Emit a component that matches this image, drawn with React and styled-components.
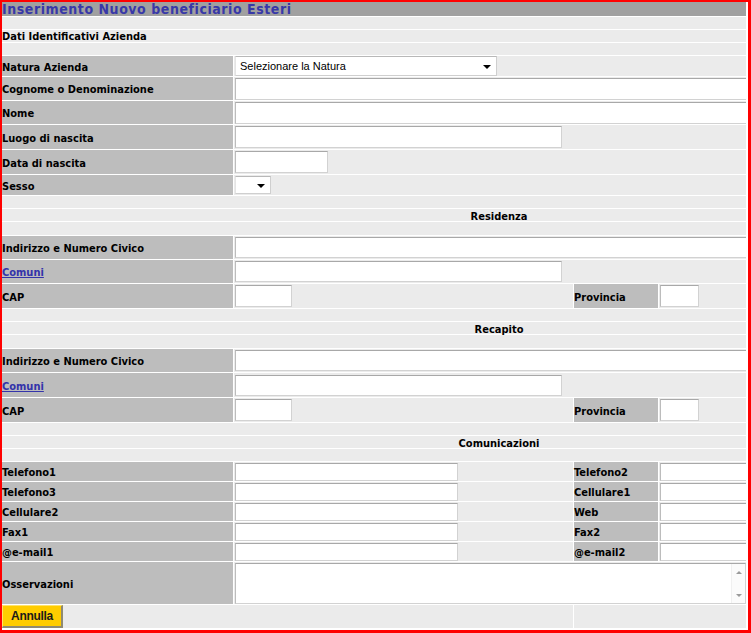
import React from "react";
import styled, { createGlobalStyle } from "styled-components";

const GlobalStyle = createGlobalStyle`
  html, body { margin: 0; padding: 0; background: #fff; }
  body { width: 751px; height: 633px; overflow: hidden; }
  * { box-sizing: border-box; }
`;

const Frame = styled.div`
  width: 751px;
  height: 633px;
  border-style: solid;
  border-color: #ff0000;
  border-width: 2px 3px 3px 2px;
  padding: 0 2px 2px 0;
  background: #fff;
`;

const Viewport = styled.div`
  width: 744px;
  height: 626px;
  overflow: hidden;
`;

const Sheet = styled.div`
  width: 994px;
  display: flex;
  flex-direction: column;
  gap: 1px;
  background: #fff;
  font-family: "DejaVu Sans Condensed", "DejaVu Sans", sans-serif;
  font-size: 11px;
  font-weight: bold;
  color: #000;
`;

const TitleBar = styled.div`
  height: 14px;
  background: #a0a0a0;
  color: #3838a8;
  font-size: 14px;
  line-height: 15px;
  letter-spacing: 0.55px;
  white-space: nowrap;
`;

const Band = styled.div`
  height: ${(p) => p.$h || 12}px;
  background: #ebebeb;
  line-height: ${(p) => (p.$h || 12) + (p.$center ? 4 : 2)}px;
  text-align: ${(p) => (p.$center ? "center" : "left")};
  white-space: nowrap;
  overflow: visible;
`;

const Row = styled.div`
  height: ${(p) => p.$h}px;
  display: grid;
  grid-template-columns: ${(p) =>
    p.$quad ? "231px 339px 84px 1fr" : p.$foot ? "571px 1fr" : "231px 1fr"};
  gap: 1px;
  background: #fff;
`;

const Label = styled.div`
  background: #bdbdbd;
  display: flex;
  align-items: center;
  white-space: nowrap;
  padding-top: 2px;
`;

const Value = styled.div`
  background: #ebebeb;
  display: flex;
  align-items: center;
  padding-left: 1px;
`;

const TextInput = styled.input`
  width: ${(p) => p.$w}px;
  height: ${(p) => p.$ih || 21}px;
  background: #fff;
  border: 1px solid;
  border-color: #a8a8a8 #d2d2d2 #d2d2d2 #bcbcbc;
  margin: 0;
  padding: 0 2px;
  font-family: "Liberation Sans", Arial, sans-serif;
  font-size: 11px;
  outline: none;
  flex: none;
`;

const SelectBox = styled.div`
  width: ${(p) => p.$w}px;
  height: ${(p) => p.$ih}px;
  background: #fff;
  border: 1px solid;
  border-color: #b8b8b8 #cfcfcf #cfcfcf #e4e4e4;
  display: flex;
  align-items: center;
  justify-content: space-between;
  padding: 0 5px 0 4px;
  font-family: "Liberation Sans", Arial, sans-serif;
  font-size: 11px;
  font-weight: normal;
  color: #000;
  flex: none;
`;

const Caret = styled.span`
  width: 0;
  height: 0;
  border-left: 4px solid transparent;
  border-right: 4px solid transparent;
  border-top: 4px solid #000;
  margin-top: 1px;
`;

const LinkText = styled.a`
  color: #3333aa;
  text-decoration: underline;
  cursor: pointer;
`;

const AreaBox = styled.div`
  width: 511px;
  height: 41px;
  display: flex;
  background: #fff;
  border: 1px solid;
  border-color: #a8a8a8 #d2d2d2 #d2d2d2 #bcbcbc;
  flex: none;
`;

const Area = styled.textarea`
  flex: 1;
  border: none;
  resize: none;
  outline: none;
  margin: 0;
  padding: 2px;
  font-family: "Liberation Sans", Arial, sans-serif;
  font-size: 11px;
  overflow: hidden;
`;

const Rail = styled.div`
  width: 14px;
  display: flex;
  flex-direction: column;
  align-items: center;
  justify-content: space-between;
  padding: 7px 0 6px;
  background: #fbfbfb;
  border-left: 1px solid #f0f0f0;
`;

const RailArrow = styled.span`
  width: 0;
  height: 0;
  border-left: 3px solid transparent;
  border-right: 3px solid transparent;
  ${(p) =>
    p.$up
      ? "border-bottom: 3px solid #9a9a9a;"
      : "border-top: 3px solid #9a9a9a;"}
`;

const FootCell = styled.div`
  background: #ebebeb;
  display: flex;
  align-items: stretch;
`;

const Button = styled.button`
  width: 61px;
  height: 23px;
  margin: 0;
  padding: 0;
  background: #ffcc00;
  border: 1px solid;
  border-color: #ffe36a #8f8a72 #8f8a72 #ffe36a;
  border-right-width: 2px;
  border-bottom-width: 2px;
  font-family: "Liberation Sans", Arial, sans-serif;
  font-size: 12px;
  font-weight: bold;
  letter-spacing: -0.3px;
  color: #1a1a1a;
  cursor: pointer;
`;

function Field({ label, h, children }) {
  return (
    <Row $h={h}>
      <Label>{label}</Label>
      <Value>{children}</Value>
    </Row>
  );
}

function Quad({ label, h, left, label2, right }) {
  return (
    <Row $h={h} $quad>
      <Label>{label}</Label>
      <Value>{left}</Value>
      <Label>{label2}</Label>
      <Value>{right}</Value>
    </Row>
  );
}

function AddressBlock({ title }) {
  return (
    <>
      <Band $h={12} />
      <Band $h={12} $center>
        {title}
      </Band>
      <Band $h={13} />
      <Field label="Indirizzo e Numero Civico" h={23}>
        <TextInput $w={720} />
      </Field>
      <Field label={<LinkText>Comuni</LinkText>} h={title === "Residenza" ? 23 : 24}>
        <TextInput $w={327} />
      </Field>
      <Quad
        label="CAP"
        h={24}
        left={<TextInput $w={57} $ih={22} />}
        label2="Provincia"
        right={<TextInput $w={39} $ih={22} />}
      />
    </>
  );
}

const contacts = [
  ["Telefono1", "Telefono2"],
  ["Telefono3", "Cellulare1"],
  ["Cellulare2", "Web"],
  ["Fax1", "Fax2"],
  ["@e-mail1", "@e-mail2"],
];

export default function App() {
  return (
    <>
      <GlobalStyle />
      <Frame>
        <Viewport>
          <Sheet>
            <TitleBar>Inserimento Nuovo beneficiario Esteri</TitleBar>
            <Band $h={12} />
            <Band $h={12}>Dati Identificativi Azienda</Band>
            <Band $h={12} />
            <Field label="Natura Azienda" h={20}>
              <SelectBox $w={262} $ih={20}>
                <span>Selezionare la Natura</span>
                <Caret />
              </SelectBox>
            </Field>
            <Field label="Cognome o Denominazione" h={23}>
              <TextInput $w={720} $ih={22} />
            </Field>
            <Field label="Nome" h={23}>
              <TextInput $w={720} $ih={22} />
            </Field>
            <Field label="Luogo di nascita" h={24}>
              <TextInput $w={327} $ih={22} />
            </Field>
            <Field label="Data di nascita" h={24}>
              <TextInput $w={93} $ih={22} />
            </Field>
            <Field label="Sesso" h={20}>
              <SelectBox $w={36} $ih={18}>
                <span />
                <Caret />
              </SelectBox>
            </Field>
            <AddressBlock title="Residenza" />
            <AddressBlock title="Recapito" />
            <Band $h={12} />
            <Band $h={12} $center>
              Comunicazioni
            </Band>
            <Band $h={12} />
            {contacts.map(([a, b]) => (
              <Quad
                key={a}
                label={a}
                h={19}
                left={<TextInput $w={223} $ih={18} />}
                label2={b}
                right={<TextInput $w={223} $ih={18} />}
              />
            ))}
            <Field label="Osservazioni" h={42}>
              <AreaBox>
                <Area />
                <Rail>
                  <RailArrow $up />
                  <RailArrow />
                </Rail>
              </AreaBox>
            </Field>
            <Row $h={23} $foot>
              <FootCell>
                <Button type="button">Annulla</Button>
              </FootCell>
              <FootCell />
            </Row>
          </Sheet>
        </Viewport>
      </Frame>
    </>
  );
}
